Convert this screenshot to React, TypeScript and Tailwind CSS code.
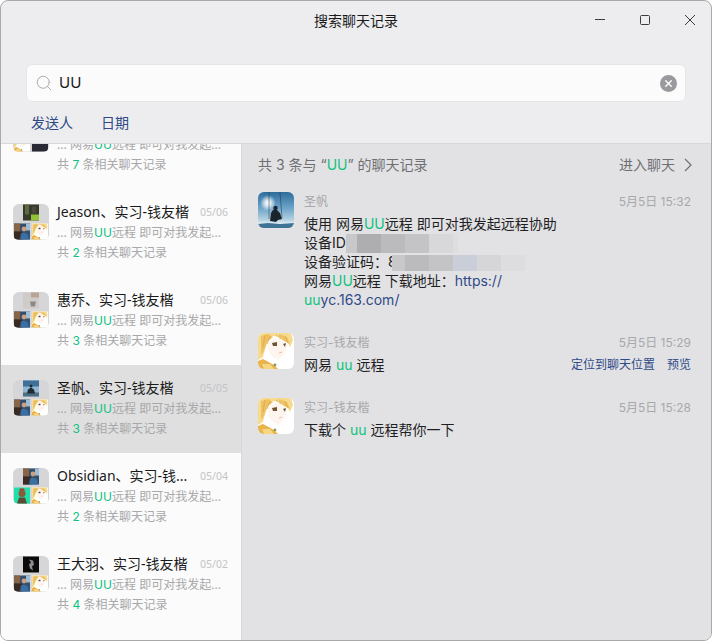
import React from "react";
import { Search, X } from "lucide-react";

const Anime = () => (
  <svg viewBox="0 0 36 36" className="block w-full h-full">
    <rect width="36" height="36" fill="#ffffff" />
    <path d="M0 0h33l2 7-3 7-3-6-6-4-8-1-5 5-3 8-2 8-5 3z" fill="#f6da8e" />
    <path d="M10 10l6-5 8 1 5 6-2 8-7 7-5-3-5-6z" fill="#fef6ee" />
    <path d="M3 3l7-2 5 3-6 5-3 9-3 4zM21 1l8 3 3 7-6-3-5-4z" fill="#eec262" />
    <path d="M7 2l-2 12M12 3l-3 8M18 2l5 4M27 3l3 7" stroke="#d9a548" strokeWidth="0.7" fill="none" />
    <path d="M14 10l5-1 0 4-4 0z" fill="#6f5434" />
    <path d="M25 11l3-1-1 4z" fill="#6f5434" />
    <path d="M21 20l3-1" stroke="#e0a890" strokeWidth="0.7" />
    <path d="M0 28l5-2 11 6 4 4H0z" fill="#e9b44c" />
    <path d="M4 31l8 0 4 5H6z" fill="#f5d681" />
    <circle cx="17" cy="32" r="1.4" fill="#8a9a4c" />
  </svg>
);

const Swing = () => (
  <svg viewBox="0 0 36 36" className="block w-full h-full">
    <defs>
      <linearGradient id="sky" x1="0" y1="0" x2="0" y2="1">
        <stop offset="0" stopColor="#2c6c9c" />
        <stop offset="0.45" stopColor="#6ea4c9" />
        <stop offset="0.78" stopColor="#b6d2e3" />
        <stop offset="0.88" stopColor="#e4eef3" />
        <stop offset="1" stopColor="#4f86a8" />
      </linearGradient>
      <radialGradient id="sun">
        <stop offset="0" stopColor="#ffffff" />
        <stop offset="0.35" stopColor="#ffffff" stopOpacity="0.8" />
        <stop offset="1" stopColor="#ffffff" stopOpacity="0" />
      </radialGradient>
    </defs>
    <rect width="36" height="36" fill="url(#sky)" />
    <circle cx="10" cy="11" r="8" fill="url(#sun)" />
    <path d="M11 0L11 27M22 0L24 26" stroke="#24303c" strokeWidth="0.5" />
    <path d="M12 29l1-8 2-3 4 0 3 3 2 6-4 1-2 2z" fill="#1b242d" />
    <circle cx="17.5" cy="16" r="2.2" fill="#1b242d" />
    <path d="M0 32l10-1 12 1 14-1v5H0z" fill="#3f7396" />
  </svg>
);

const Desk = () => (
  <svg viewBox="0 0 16 16" className="block w-full h-full">
    <rect width="16" height="16" fill="#33506c" />
    <rect x="0" y="0" width="6" height="8" fill="#8a6444" />
    <rect x="0" y="8" width="8" height="8" fill="#3a2a22" />
    <rect x="12" y="0" width="4" height="7" fill="#9fbdd4" />
    <circle cx="10" cy="5.5" r="2.4" fill="#cf9e7e" />
    <path d="M6 16l1-6 3-1 4 2 1 5z" fill="#3a6fa3" />
  </svg>
);

const Plant = () => (
  <svg viewBox="0 0 16 16" className="block w-full h-full">
    <rect width="16" height="16" fill="#39382c" />
    <rect x="2" y="0" width="4" height="10" fill="#5c6a44" />
    <rect x="9" y="2" width="4" height="7" fill="#4b4a3a" />
    <rect x="8" y="10" width="8" height="6" fill="#92c334" />
  </svg>
);

const Wall = () => (
  <svg viewBox="0 0 16 16" className="block w-full h-full">
    <rect width="16" height="16" fill="#cfcbc8" />
    <rect x="8" y="0" width="8" height="5" fill="#b9a596" />
    <path d="M7 9h6l-1 5H8z" fill="#8f8880" />
  </svg>
);

const Silhouette = () => (
  <svg viewBox="0 0 16 16" className="block w-full h-full">
    <rect width="16" height="16" fill="#8fb6d2" />
    <rect width="16" height="6" fill="#3f7099" />
    <rect y="12" width="16" height="4" fill="#4c6f86" />
    <path d="M4 13l1-4 3-2 3 2 1 4z" fill="#1f2a33" />
    <circle cx="8" cy="5.5" r="1.5" fill="#1f2a33" />
  </svg>
);

const Monkey = () => (
  <svg viewBox="0 0 16 16" className="block w-full h-full">
    <rect width="16" height="16" fill="#1fe0a8" />
    <circle cx="8" cy="6" r="3.5" fill="#8a5a3c" />
    <path d="M5 3h6l-1-2H6z" fill="#b8322c" />
    <path d="M3 16l2-6h6l2 6z" fill="#5d4a32" />
  </svg>
);

const Dark = () => (
  <svg viewBox="0 0 16 16" className="block w-full h-full">
    <rect width="16" height="16" fill="#0b0b0b" />
    <path d="M6 3l4 1 1 4-2 2 1 4-3-2-1-4 2-2z" fill="#8d8d8d" />
  </svg>
);

const Poster = () => (
  <svg viewBox="0 0 16 16" className="block w-full h-full">
    <rect width="16" height="16" fill="#2a2a34" />
    <rect x="2" y="1" width="5" height="5" fill="#7a3a34" />
    <rect x="9" y="3" width="5" height="4" fill="#5a4a6a" />
  </svg>
);

const Group = ({ top, left, right }: { top: React.ReactNode; left: React.ReactNode; right: React.ReactNode }) => (
  <div className="w-9 h-9 rounded-md bg-[#d6d6d8] overflow-hidden shrink-0 flex flex-col items-center justify-between">
    <div className="w-4 h-[17px]">{top}</div>
    <div className="w-full px-px flex justify-between">
      <div className="w-4 h-[17px]">{left}</div>
      <div className="w-4 h-[17px]">{right}</div>
    </div>
  </div>
);

const rows = [
  { top: <Desk />, left: <Anime />, right: <Poster />, name: "", date: "", count: 7, cut: true },
  { top: <Plant />, left: <Desk />, right: <Anime />, name: "Jeason、实习-钱友楷", date: "05/06", count: 2 },
  { top: <Wall />, left: <Desk />, right: <Anime />, name: "惠乔、实习-钱友楷", date: "05/06", count: 3 },
  { top: <Silhouette />, left: <Desk />, right: <Anime />, name: "圣帆、实习-钱友楷", date: "05/05", count: 3, active: true },
  { top: <Desk />, left: <Monkey />, right: <Anime />, name: "Obsidian、实习-钱...", date: "05/04", count: 2 },
  { top: <Dark />, left: <Desk />, right: <Anime />, name: "王大羽、实习-钱友楷", date: "05/02", count: 4 },
];

const Row = ({ r }: { r: (typeof rows)[number] }) => (
  <div className={`h-[88px] shrink-0 flex pl-3 pr-[13px] pt-[15px] gap-2 ${r.active ? "bg-[#dfdfe0]" : ""} ${r.cut ? "mt-[-43px]" : ""}`}>
    <Group top={r.top} left={r.left} right={r.right} />
    <div className="flex-1 min-w-0">
      <div className="flex items-start justify-between h-[17px] font-['Noto_Sans','Noto_Sans_CJK_SC',sans-serif]">
        <span className="text-[14px] leading-[16px] text-[#1a1a1a] whitespace-nowrap">{r.name}</span>
        <span className="text-[10.5px] leading-[16px] text-[#c4c4c6]">{r.date}</span>
      </div>
      <div className="text-[12px] leading-[18px] mt-[3px] text-[#a8a8aa] whitespace-nowrap">
        <span className="font-['Noto_Sans',sans-serif]">...</span> 网易<span className="text-[#0fc27c]">UU</span>远程 即可对我发起<span className="font-['Noto_Sans',sans-serif]">...</span>
      </div>
      <div className="text-[12px] leading-[18px] mt-[2px] text-[#a8a8aa] whitespace-nowrap">
        共 <span className="text-[#0fc27c]">{r.count}</span> 条相关聊天记录
      </div>
    </div>
  </div>
);

const Message = ({ avatar, name, time, children, actions }: { avatar: React.ReactNode; name: string; time: string; children: React.ReactNode; actions?: boolean }) => (
  <div className="flex gap-[10px]">
    <div className="w-9 h-9 rounded-md overflow-hidden shrink-0">{avatar}</div>
    <div className="flex-1 min-w-0">
      <div className="flex justify-between text-[12px] leading-[20px] text-[#a8a8aa]">
        <span>{name}</span>
        <span>{time}</span>
      </div>
      <div className="flex justify-between items-start mt-[2px]">
        <div className="text-[14px] leading-[19px] text-[#1f1f1f] w-[256px]">{children}</div>
        {actions && (
          <div className="flex gap-3 text-[12px] leading-[19px] text-[#2f4a85] whitespace-nowrap">
            <span>定位到聊天位置</span>
            <span>预览</span>
          </div>
        )}
      </div>
    </div>
  </div>
);

export default function App() {
  return (
    <div className="w-[712px] h-[641px] bg-white font-['Inter','Noto_Sans_CJK_SC',sans-serif]">
      <div className="w-full h-full flex flex-col rounded-lg border border-[#a9a9a9] overflow-hidden bg-[#ededef]">
        <div className="h-[143px] shrink-0 flex flex-col border-b border-[#d8d8da]">
          <div className="h-[63px] relative flex items-start justify-center pt-[10px]">
            <span className="text-[14px] leading-[20px] text-[#1a1a1a]">搜索聊天记录</span>
            <div className="absolute right-[15px] top-[13px] flex items-center gap-[33px] text-[#3c3c3c]">
              <svg width="12" height="12" viewBox="0 0 12 12" fill="none" stroke="currentColor"><path d="M1 5.5h10" /></svg>
              <svg width="12" height="12" viewBox="0 0 12 12" fill="none" stroke="currentColor"><rect x="1.5" y="1.5" width="9" height="9" rx="1" /></svg>
              <svg width="12" height="12" viewBox="0 0 12 12" fill="none" stroke="currentColor"><path d="M1 1l10 10M11 1L1 11" /></svg>
            </div>
          </div>
          <div className="mx-[25px] h-[38px] shrink-0 rounded-md border border-[#e6e6e8] bg-[#fbfbfb] flex items-center px-2">
            <Search size={18} strokeWidth={1.2} className="text-[#a3a3a5]" />
            <span className="ml-[6px] text-[15px] text-[#1a1a1a] flex-1">UU</span>
            <div className="w-[17px] h-[17px] rounded-full bg-[#9a9a9e] flex items-center justify-center">
              <X size={11} strokeWidth={3} className="text-white" />
            </div>
          </div>
          <div className="flex gap-[28px] pl-[30px] mt-[11px] text-[14px] leading-[20px] text-[#2f4a85]">
            <span>发送人</span>
            <span>日期</span>
          </div>
        </div>
        <div className="flex-1 min-h-0 flex">
          <div className="w-[241px] shrink-0 bg-[#fbfbfb] border-r border-[#d8d8da] flex flex-col overflow-hidden">
            {rows.map((r) => (
              <Row key={r.name || "cut"} r={r} />
            ))}
          </div>
          <div className="flex-1 min-w-0 bg-[#e2e2e5] pl-4 pr-5">
            <div className="flex justify-between items-center h-[41px] text-[14px] text-[#6f6f72] mb-[7px]">
              <span>共 3 条与 “<span className="text-[#0fc27c]">UU</span>” 的聊天记录</span>
              <span className="flex items-center gap-2">
                进入聊天
                <svg width="10" height="14" viewBox="0 0 10 14" fill="none" stroke="currentColor" strokeWidth="1.2" className="-mr-[2px]"><path d="M2 1l6 6-6 6" /></svg>
              </span>
            </div>
            <div className="flex flex-col gap-[24px]">
              <Message avatar={<Swing />} name="圣帆" time="5月5日 15:32">
                <div className="relative">
                  使用 网易<span className="text-[#0fc27c]">UU</span>远程 即可对我发起远程协助<br />
                  设备ID<br />
                  设备验证码：8<br />
                  网易<span className="text-[#0fc27c]">UU</span>远程 下载地址：<span className="text-[#2f4a85]">https://</span><br />
                  <span className="text-[#0fc27c]">uu</span><span className="text-[#2f4a85]">yc.163.com/</span>
                  <div className="absolute left-[42px] top-[20px] flex h-[19px]">
                    <div className="w-[11px] bg-[#c8c8ca]" />
                    <div className="w-[24px] bg-[#aeaeb0]" />
                    <div className="w-[24px] bg-[#bbbbbd]" />
                    <div className="w-[24px] bg-[#c4c4c6]" />
                    <div className="w-[24px] bg-[#d8d8da]" />
                    <div className="w-[5px] bg-[#dedee0]" />
                  </div>
                  <div className="absolute left-[88px] top-[41px] flex h-[16px]">
                    <div className="w-[13px] bg-[#c8c8ca]" />
                    <div className="w-[24px] bg-[#bbbbbd]" />
                    <div className="w-[24px] bg-[#c4c4c6]" />
                    <div className="w-[24px] bg-[#c9ced9]" />
                    <div className="w-[24px] bg-[#d6d6d9]" />
                    <div className="w-[24px] bg-[#dddde0]" />
                  </div>
                </div>
              </Message>
              <Message avatar={<Anime />} name="实习-钱友楷" time="5月5日 15:29" actions>
                网易 <span className="text-[#0fc27c]">uu</span> 远程
              </Message>
              <Message avatar={<Anime />} name="实习-钱友楷" time="5月5日 15:28">
                下载个 <span className="text-[#0fc27c]">uu</span> 远程帮你一下
              </Message>
            </div>
          </div>
        </div>
      </div>
    </div>
  );
}
